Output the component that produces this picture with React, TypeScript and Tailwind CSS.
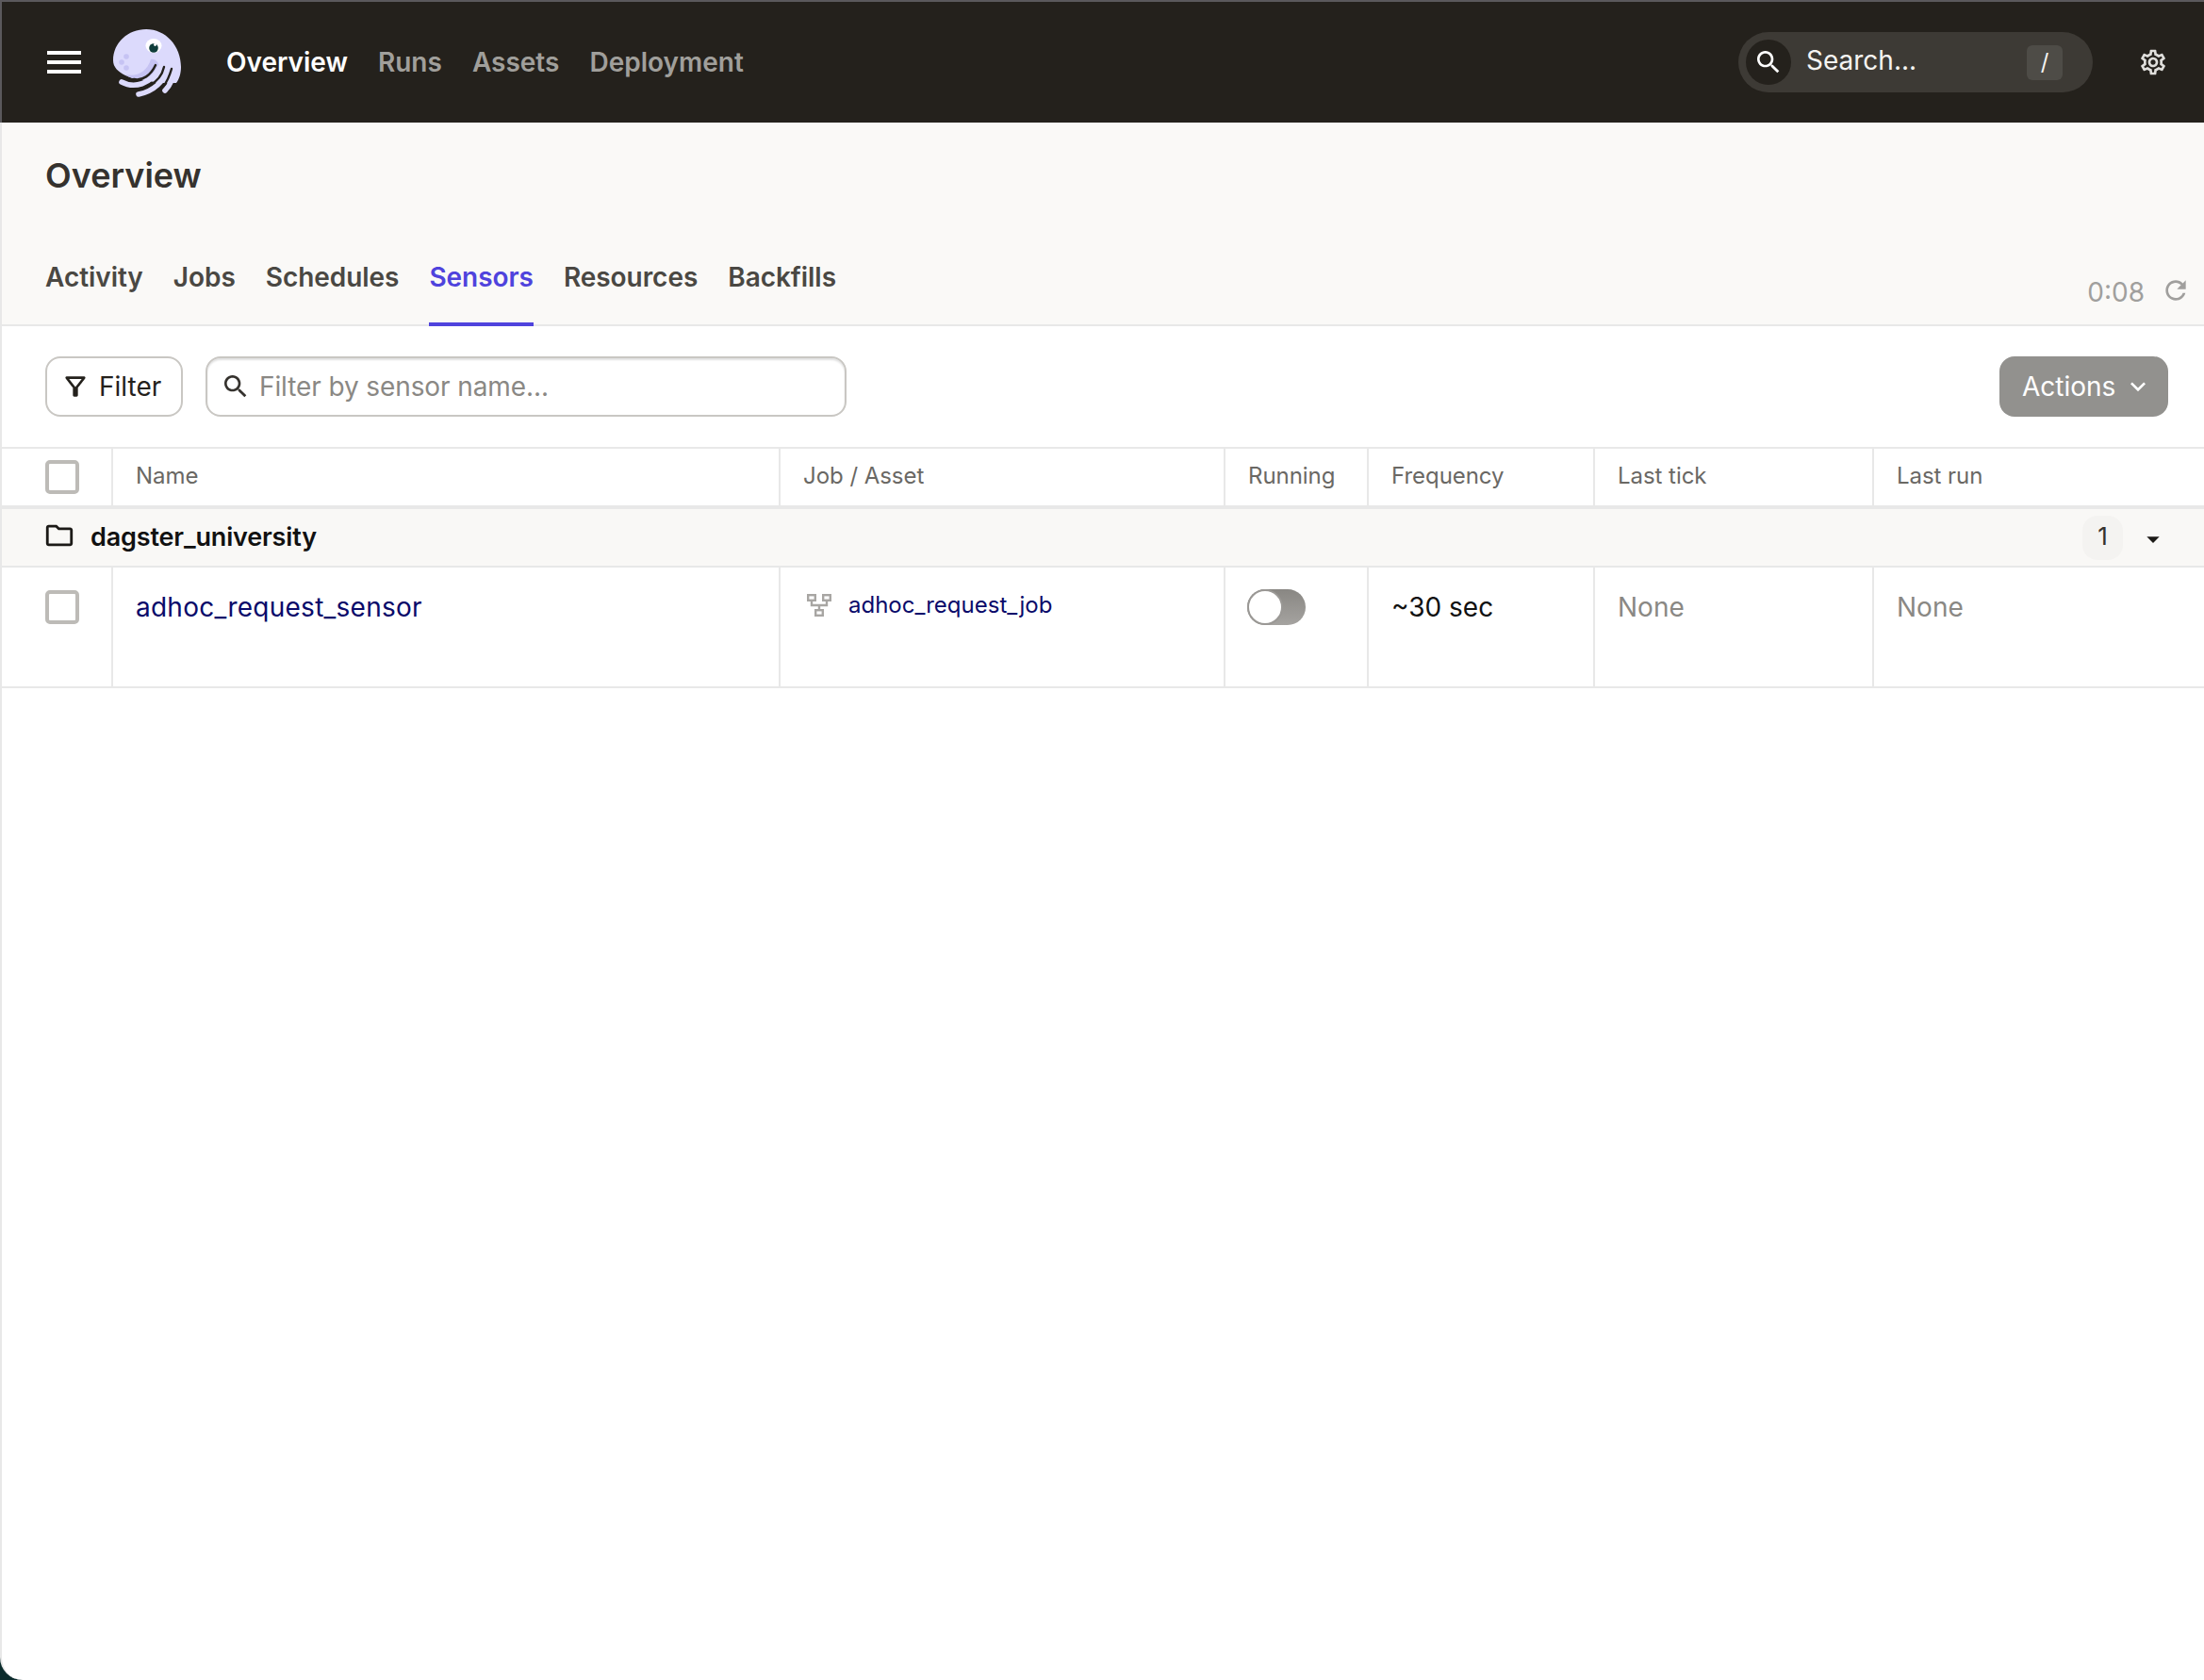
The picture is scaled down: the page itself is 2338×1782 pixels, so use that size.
const SEARCH_PATH =
  "M15.5 14h-.79l-.28-.27C15.41 12.59 16 11.11 16 9.5 16 5.91 13.09 3 9.5 3S3 5.91 3 9.5 5.91 16 9.5 16c1.61 0 3.09-.59 4.23-1.57l.27.28v.79l5 4.99L20.49 19l-4.99-5zm-6 0C7.01 14 5 11.99 5 9.5S7.01 5 9.5 5 14 7.01 14 9.5 11.99 14 9.5 14z";

const GEAR_PATH =
  "M19.43 12.98c.04-.32.07-.64.07-.98 0-.34-.03-.66-.07-.98l2.11-1.65c.19-.15.24-.42.12-.64l-2-3.46c-.09-.16-.26-.25-.44-.25-.06 0-.12.01-.17.03l-2.49 1c-.52-.4-1.08-.73-1.69-.98l-.38-2.65C14.46 2.18 14.25 2 14 2h-4c-.25 0-.46.18-.49.42l-.38 2.65c-.61.25-1.17.59-1.69.98l-2.49-1c-.06-.02-.12-.03-.18-.03-.17 0-.34.09-.43.25l-2 3.46c-.13.22-.07.49.12.64l2.11 1.65c-.04.32-.07.65-.07.98 0 .33.03.66.07.98l-2.11 1.65c-.19.15-.24.42-.12.64l2 3.46c.09.16.26.25.44.25.06 0 .12-.01.17-.03l2.49-1c.52.4 1.08.73 1.69.98l.38 2.65c.03.24.24.42.49.42h4c.25 0 .46-.18.49-.42l.38-2.65c.61-.25 1.17-.59 1.69-.98l2.49 1c.06.02.12.03.18.03.17 0 .34-.09.43-.25l2-3.46c.12-.22.07-.49-.12-.64l-2.11-1.65zm-1.98-1.71c.04.31.05.52.05.73 0 .21-.02.43-.05.73l-.14 1.13.89.7 1.08.84-.7 1.21-1.27-.51-1.04-.42-.9.68c-.43.32-.84.56-1.25.73l-1.06.43-.16 1.13-.2 1.35h-1.4l-.19-1.35-.16-1.13-1.06-.43c-.43-.18-.83-.41-1.23-.71l-.91-.7-1.06.43-1.27.51-.7-1.21 1.08-.84.89-.7-.14-1.13c-.03-.31-.05-.54-.05-.74s.02-.43.05-.73l.14-1.13-.89-.7-1.08-.84.7-1.21 1.27.51 1.04.42.9-.68c.43-.32.84-.56 1.25-.73l1.06-.43.16-1.13.2-1.35h1.39l.19 1.35.16 1.13 1.06.43c.43.18.83.41 1.23.71l.91.7 1.06-.43 1.27-.51.7 1.21-1.07.85-.89.7.14 1.13zM12 8c-2.21 0-4 1.79-4 4s1.79 4 4 4 4-1.79 4-4-1.79-4-4-4zm0 6c-1.1 0-2-.9-2-2s.9-2 2-2 2 .9 2 2-.9 2-2 2z";

const NAV_ITEMS = ["Overview", "Runs", "Assets", "Deployment"];
const TABS = ["Activity", "Jobs", "Schedules", "Sensors", "Resources", "Backfills"];
const COLUMNS = [
  { label: "Name", width: "w-[708px]" },
  { label: "Job / Asset", width: "w-[472px]" },
  { label: "Running", width: "w-[152px]" },
  { label: "Frequency", width: "w-[240px]" },
  { label: "Last tick", width: "w-[296px]" },
];

function MaterialIcon({ d, className }: { d: string; className: string }) {
  return (
    <svg viewBox="0 0 24 24" fill="currentColor" className={className}>
      <path d={d} />
    </svg>
  );
}

function Logo() {
  return (
    <svg viewBox="0 0 110 100" className="w-[110px] h-[100px] shrink-0">
      <path
        d="M20 48 C20 29 36 15 55 15 C76 15 92 33 92 55 C92 62 90 68 87 72 L66 72 C56 68 42 69 33 64 C25 60 20 55 20 48Z"
        fill="#dcdafc"
      />
      <path d="M33 63 C45 66 56 60 60 47 C64 46 68 49 69 55 C62 68 44 72 33 63Z" fill="#c6c3f3" />
      <path d="M29 71 C42 78 60 74 70 55" fill="none" stroke="#dcdafc" strokeWidth="5.6" strokeLinecap="round" />
      <path d="M47 84 C62 81 75 71 78 54" fill="none" stroke="#dcdafc" strokeWidth="5.6" strokeLinecap="round" />
      <path d="M75 80 C80 75 84 66 85 57" fill="none" stroke="#dcdafc" strokeWidth="5.6" strokeLinecap="round" />
      <path d="M42 68 C51 70 60 64 65 53" fill="none" stroke="#24211c" strokeWidth="2.4" strokeLinecap="round" />
      <path d="M58 75 C66 71 72 64 74 55" fill="none" stroke="#24211c" strokeWidth="2.4" strokeLinecap="round" />
      <path d="M73 76 C77 71 80 64 82 57" fill="none" stroke="#24211c" strokeWidth="2.4" strokeLinecap="round" />
      <circle cx="34" cy="44" r="2.8" fill="#c6c3f3" />
      <circle cx="29" cy="50" r="2.8" fill="#c6c3f3" />
      <circle cx="34" cy="56" r="2.8" fill="#c6c3f3" />
      <ellipse cx="63" cy="32.5" rx="8.5" ry="7.5" fill="#ffffff" />
      <circle cx="63" cy="35" r="4.8" fill="#0f3d3a" />
      <circle cx="64.5" cy="31.5" r="1.4" fill="#ffffff" />
    </svg>
  );
}

function JobIcon() {
  return (
    <svg viewBox="0 0 26 24" fill="none" stroke="#a8a6a3" strokeWidth="2.4" className="w-[26px] h-[24px] shrink-0">
      <rect x="1.2" y="1.2" width="7.6" height="5.6" />
      <rect x="17.2" y="1.2" width="7.6" height="5.6" />
      <rect x="9.2" y="17.2" width="7.6" height="5.6" />
      <path d="M5 7v5h16V7M13 12v5" />
    </svg>
  );
}

function Checkbox() {
  return <div className="w-9 h-9 rounded-[5px] border-4 border-[#bdbbb7] bg-white" />;
}

export default function App() {
  return (
    <div className="h-[1782px] bg-[#0b2b2c] font-['Inter',sans-serif] overflow-hidden flex flex-col">
      {/* top nav */}
      <div className="h-[130px] shrink-0 border-t-2 border-l-2 border-[#5b595c] bg-[#24211c] flex items-center pl-[48px] pr-[38px]">
        <div className="w-9 flex flex-col gap-[6px] shrink-0">
          <div className="h-1 bg-white" />
          <div className="h-1 bg-white" />
          <div className="h-1 bg-white" />
        </div>
        <div className="ml-[14px] shrink-0">
          <Logo />
        </div>
        <nav className="ml-[30px] flex gap-[32px] text-[28px] font-semibold text-[#a09f9b]">
          {NAV_ITEMS.map((item, i) => (
            <span key={item} className={i === 0 ? "text-white" : ""}>
              {item}
            </span>
          ))}
        </nav>
        <div className="ml-auto w-[376px] h-16 rounded-[32px] bg-[#3d3a35] flex items-center pl-2 pr-8 text-[28px] text-[#f5f4f2]">
          <div className="w-12 h-12 rounded-full bg-[#24211c] flex items-center justify-center shrink-0">
            <MaterialIcon d={SEARCH_PATH} className="w-8 h-8 text-white" />
          </div>
          <span className="ml-4 -mt-1">Search...</span>
          <div className="ml-auto w-[38px] h-[37px] rounded-md bg-[#4e4c47] flex items-center justify-center text-2xl">
            /
          </div>
        </div>
        <div className="ml-12">
          <MaterialIcon d={GEAR_PATH} className="w-8 h-8 text-[#e0dfdc]" />
        </div>
      </div>

      {/* page body */}
      <div className="flex-1 bg-white rounded-bl-[24px] border-l-2 border-[#e8e8e8] flex flex-col">
        <div className="h-[216px] shrink-0 bg-[#faf9f7] border-b-2 border-[#e8e8e8] flex flex-col pl-[46px] pr-[14px]">
          <h1 className="mt-[36px] text-[36px] leading-[40px] font-semibold text-[#35322e]">Overview</h1>
          <div className="mt-auto flex items-end justify-between">
            <div className="flex gap-[32px] text-[28px] leading-[36px] font-semibold tracking-[-0.05px] text-[#4a4843]">
              {TABS.map((tab) => (
                <div
                  key={tab}
                  className={
                    tab === "Sensors"
                      ? "pb-[30px] -mb-[2px] border-b-4 border-[#4f43dd] text-[#4f43dd]"
                      : "pb-[30px]"
                  }
                >
                  {tab}
                </div>
              ))}
            </div>
            <div className="flex items-center gap-[17px] pb-[16px] text-[28px] leading-[36px] text-[#a09f9d]">
              <span>0:08</span>
              <MaterialIcon d="M17.65 6.35C16.2 4.9 14.21 4 12 4c-4.42 0-7.99 3.58-7.99 8s3.57 8 7.99 8c3.73 0 6.84-2.55 7.73-6h-2.08c-.82 2.33-3.04 4-5.65 4-3.31 0-6-2.69-6-6s2.69-6 6-6c1.66 0 3.14.69 4.22 1.78L13 11h7V4l-2.35 2.35z" className="w-8 h-8 -mt-1" />
            </div>
          </div>
        </div>

        {/* filter bar */}
        <div className="h-[128px] shrink-0 flex items-center pl-[46px] pr-[38px]">
          <button className="w-[146px] h-16 rounded-2xl border-2 border-[#c9c7c3] flex items-center pl-[14px] gap-[9px] text-[28px] text-[#24211c]">
            <MaterialIcon d="M7 6h10l-5.01 6.3L7 6zm-2.75-.39C6.27 8.2 10 13 10 13v6c0 .55.45 1 1 1h2c.55 0 1-.45 1-1v-6s3.72-4.8 5.74-7.39c.51-.66.04-1.61-.79-1.61H5.04c-.83 0-1.3.95-.79 1.61z" className="w-8 h-8" />
            Filter
          </button>
          <div className="ml-[24px] w-[680px] h-16 rounded-2xl border-2 border-[#c9c7c3] shadow-[inset_0_2px_2px_rgba(0,0,0,0.12)] flex items-center pl-[14px] gap-[9px] text-[28px] tracking-[-0.1px] text-[#8a8884]">
            <MaterialIcon d={SEARCH_PATH} className="w-8 h-8 text-[#35322e]" />
            Filter by sensor name...
          </div>
          <button className="ml-auto w-[179px] h-16 rounded-2xl bg-[#92918e] flex items-center pl-[24px] gap-[8px] text-[28px] text-white">
            Actions
            <MaterialIcon d="M16.59 8.59L12 13.17 7.41 8.59 6 10l6 6 6-6z" className="w-8 h-8" />
          </button>
        </div>

        {/* table header */}
        <div className="h-[66px] shrink-0 border-t-2 border-b-4 border-[#e8e8e8] flex text-2xl tracking-[-0.04px] text-[#6a6864]">
          <div className="w-[118px] border-r-2 border-[#e8e8e8] pl-[46px] flex items-center">
            <Checkbox />
          </div>
          {COLUMNS.map((col) => (
            <div key={col.label} className={`${col.width} border-r-2 border-[#e8e8e8] pl-[24px] pb-[2px] flex items-center`}>
              {col.label}
            </div>
          ))}
          <div className="flex-1 pl-[24px] pb-[2px] flex items-center">Last run</div>
        </div>

        {/* repo group */}
        <div className="h-[62px] shrink-0 bg-[#f9f8f6] border-b-2 border-[#e8e8e8] flex items-center pl-[46px] pr-[38px]">
          <MaterialIcon d="M9.17 6l2 2H20v10H4V6h5.17M10 4H4c-1.1 0-1.99.9-1.99 2L2 18c0 1.1.9 2 2 2h16c1.1 0 2-.9 2-2V8c0-1.1-.9-2-2-2h-8l-2-2z" className="w-[34px] h-[34px] text-[#1c1a17] -mt-1 -ml-[2px]" />
          <span className="ml-[16px] text-[27px] font-semibold tracking-[-0.16px] text-[#111]">dagster_university</span>
          <div className="ml-auto w-[43px] h-[47px] rounded-2xl bg-[#f4f3f1] flex items-center justify-center pb-1 text-[26px] text-[#35322e]">
            1
          </div>
          <MaterialIcon d="M7 10l5 5 5-5z" className="ml-4 mt-1 w-8 h-8 text-[#1c1a17]" />
        </div>

        {/* sensor row */}
        <div className="h-[128px] shrink-0 border-b-2 border-[#e8e8e8] flex text-[28px] leading-[36px]">
          <div className="w-[118px] border-r-2 border-[#e8e8e8] pl-[46px] pt-6">
            <Checkbox />
          </div>
          <div className="w-[708px] border-r-2 border-[#e8e8e8] pl-[24px] pt-6 tracking-[0.25px] text-[#0a0a6a]">adhoc_request_sensor</div>
          <div className="w-[472px] border-r-2 border-[#e8e8e8] pl-[28px] pt-[22px] flex items-start gap-[18px] text-2xl leading-[36px] text-[#0a0a6a]">
            <div className="pt-[6px]">
              <JobIcon />
            </div>
            <span>adhoc_request_job</span>
          </div>
          <div className="w-[152px] border-r-2 border-[#e8e8e8] pl-[23px] pt-[23px]">
            <div className="w-[62px] h-[38px] rounded-full bg-gradient-to-b from-[#898783] to-[#a5a3a0]">
              <div className="w-[38px] h-[38px] rounded-full bg-white border-2 border-[#9a9895]" />
            </div>
          </div>
          <div className="w-[240px] border-r-2 border-[#e8e8e8] pl-[24px] pt-6 text-[#111]">~30 sec</div>
          <div className="w-[296px] border-r-2 border-[#e8e8e8] pl-[24px] pt-6 text-[#8a8884]">None</div>
          <div className="flex-1 pl-[24px] pt-6 text-[#8a8884]">None</div>
        </div>
      </div>
    </div>
  );
}
